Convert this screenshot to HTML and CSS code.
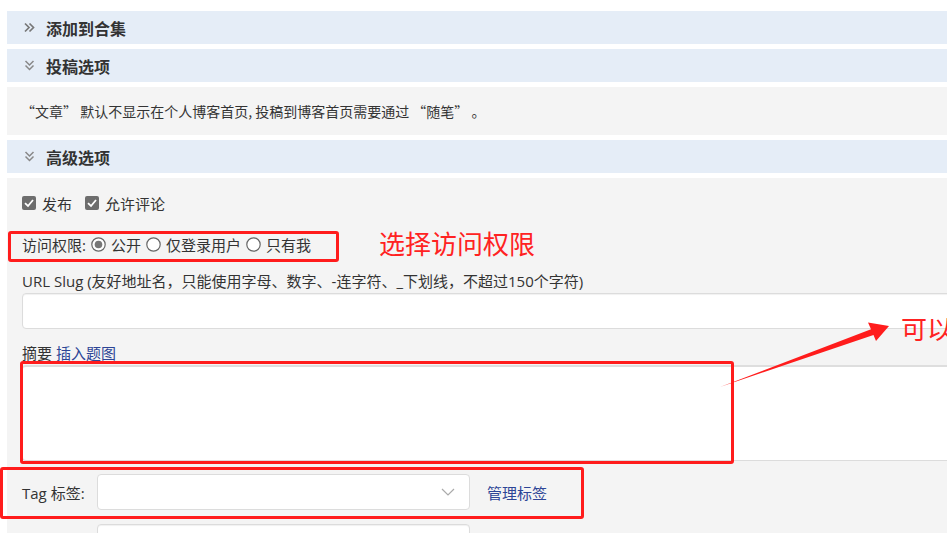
FILE: index.html
```html
<!DOCTYPE html>
<html lang="zh">
<head>
<meta charset="utf-8">
<link rel="stylesheet" href="styles.css">
</head>
<body>
<div class="page">
  <div class="bar bar-first">
    <svg class="chev" width="11" height="11" viewBox="0 0 11 11"><path d="M1 1.5 L5 5.5 L1 9.5 M5.5 1.5 L9.5 5.5 L5.5 9.5" fill="none" stroke="#777" stroke-width="1.7"/></svg>
    <span>添加到合集</span>
  </div>
  <div class="bar">
    <svg class="chev" width="11" height="11" viewBox="0 0 11 11"><path d="M1.5 1 L5.5 5 L9.5 1 M1.5 5.5 L5.5 9.5 L9.5 5.5" fill="none" stroke="#888" stroke-width="1.5"/></svg>
    <span>投稿选项</span>
  </div>
  <div class="info">“文章” 默认不显示在个人博客首页, 投稿到博客首页需要通过 “随笔” 。</div>
  <div class="bar">
    <svg class="chev" width="11" height="11" viewBox="0 0 11 11"><path d="M1.5 1 L5.5 5 L9.5 1 M1.5 5.5 L5.5 9.5 L9.5 5.5" fill="none" stroke="#888" stroke-width="1.5"/></svg>
    <span>高级选项</span>
  </div>
  <div class="panel">
    <div class="checks">
      <span class="cb"><svg width="14" height="14" viewBox="0 0 14 14"><rect x="0" y="0" width="14" height="14" rx="2" fill="#6d6d6d"/><path d="M3 7.2 L6 10 L11 4" fill="none" stroke="#fff" stroke-width="1.8"/></svg>发布</span>
      <span class="cb"><svg width="14" height="14" viewBox="0 0 14 14"><rect x="0" y="0" width="14" height="14" rx="2" fill="#6d6d6d"/><path d="M3 7.2 L6 10 L11 4" fill="none" stroke="#fff" stroke-width="1.8"/></svg>允许评论</span>
    </div>
    <div class="access">
      <span>访问权限:</span>
      <span class="rd"><svg width="15" height="15" viewBox="0 0 15 15"><circle cx="7.5" cy="7.5" r="6.7" fill="#fff" stroke="#666" stroke-width="1.2"/><circle cx="7.5" cy="7.5" r="3.8" fill="#777"/></svg>公开</span>
      <span class="rd"><svg width="15" height="15" viewBox="0 0 15 15"><circle cx="7.5" cy="7.5" r="6.7" fill="#fff" stroke="#666" stroke-width="1.2"/></svg>仅登录用户</span>
      <span class="rd"><svg width="15" height="15" viewBox="0 0 15 15"><circle cx="7.5" cy="7.5" r="6.7" fill="#fff" stroke="#666" stroke-width="1.2"/></svg>只有我</span>
    </div>
    <div class="label">URL Slug (友好地址名，只能使用字母、数字、-连字符、_下划线，不超过150个字符)</div>
    <div class="input wide"></div>
    <div class="label label-sum">摘要 <a class="link">插入题图</a></div>
    <div class="textarea"></div>
    <div class="tagrow">
      <span class="taglabel">Tag 标签:</span>
      <div class="select">
        <svg width="14" height="8" viewBox="0 0 14 8"><path d="M1 1 L7 7 L13 1" fill="none" stroke="#aaa" stroke-width="1.2"/></svg>
      </div>
      <a class="link manage">管理标签</a>
    </div>
    <div class="input short"></div>
  </div>
</div>

<div class="anno box-access"></div>
<div class="anno-text t-access">选择访问权限</div>
<div class="anno box-sum"></div>
<div class="anno box-tag"></div>
<svg class="arrow" width="947" height="533" viewBox="0 0 947 533">
  <polygon points="720,387 871,329.3 868,322.5 889,326 876,341 873.5,335" fill="#ff1c1c"/>
</svg>
<div class="anno-text t-can">可以</div>
</body>
</html>
```

FILE: styles.css
```css
html, body {
  margin: 0;
  padding: 0;
  background: #fff;
  overflow: hidden;
  width: 947px;
  height: 533px;
}
body {
  position: relative;
  font-family: "Open Sans", "Noto Sans CJK SC", sans-serif;
  color: #333;
  font-size: 15px;
}
.page {
  margin-left: 7px;
  width: 1000px;
  padding-top: 11px;
}
.bar {
  height: 33px;
  background: #e5edf7;
  display: flex;
  align-items: center;
  padding-left: 17px;
  gap: 11px;
  font-weight: bold;
  font-size: 16px;
  color: #333;
  margin-bottom: 5px;
}
.chev { flex: none; }
.info {
  margin-top: 1px;
  margin-bottom: 5px;
  height: 48px;
  background: #f4f4f4;
  display: flex;
  align-items: center;
  padding-left: 14px;
  font-size: 14px;
  color: #333;
  white-space: pre;
  font-family: "Noto Sans CJK SC", sans-serif;
}
.panel {
  margin-top: 1px;
  background: #f4f4f4;
  padding: 0 15px 20px;
  height: 400px;
}
.checks {
  padding-top: 16px;
  display: flex;
  gap: 13px;
  height: 18px;
  align-items: center;
}
.cb, .rd {
  display: inline-flex;
  align-items: center;
  gap: 6px;
}
.access {
  margin-top: 23px;
  height: 18px;
  display: flex;
  align-items: center;
  gap: 5px;
}
.rd { gap: 5px; }
.label {
  margin-top: 18px;
  line-height: 20px;
  height: 20px;
  white-space: nowrap;
}
.label-sum { margin-top: 14px; }
.link { color: #2d4596; }
.input {
  margin-top: 2px;
  height: 36px;
  box-sizing: border-box;
  background: #fff;
  border: 1px solid #dcdcdc;
  border-radius: 4px;
  box-shadow: inset 0 1px 1px rgba(0,0,0,0.06);
}
.wide { width: 1000px; }
.textarea {
  margin-top: 2px;
  height: 96px;
  box-sizing: border-box;
  background: #fff;
  border: 1px solid #dcdcdc;
  border-top: 2px solid #dedede;
  border-radius: 4px;
  width: 1000px;
}
.tagrow {
  margin-top: 13px;
  display: flex;
  align-items: center;
  height: 36px;
}
.taglabel { width: 75px; flex: none; }
.select {
  width: 373px;
  height: 36px;
  background: #fff;
  border: 1px solid #dcdcdc;
  border-radius: 4px;
  display: flex;
  align-items: center;
  justify-content: flex-end;
  padding-right: 14px;
  box-sizing: border-box;
}
.manage { margin-left: 17px; }
.short {
  margin-left: 75px;
  margin-top: 14px;
  width: 373px;
}
.anno {
  position: absolute;
  border: 3px solid #ff1c1c;
  border-radius: 3px;
  box-sizing: border-box;
}
.box-access { left: 8px; top: 231px; width: 331px; height: 31px; }
.box-sum { left: 20px; top: 361px; width: 714px; height: 103px; }
.box-tag { left: 0px; top: 467px; width: 584px; height: 52px; }
.anno-text {
  position: absolute;
  color: #ff2222;
  font-size: 26px;
  line-height: 30px;
  white-space: nowrap;
  font-family: "Noto Sans CJK SC", sans-serif;
}
.t-access { left: 379px; top: 228px; }
.t-can { left: 901px; top: 313px; }
.arrow { position: absolute; left: 0; top: 0; }
```
